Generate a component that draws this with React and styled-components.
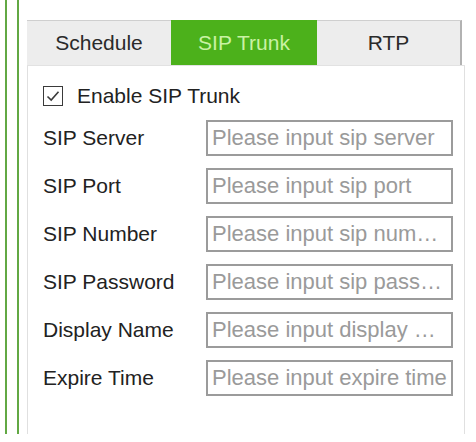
import React from 'react';
import styled, { createGlobalStyle } from 'styled-components';

const GlobalStyle = createGlobalStyle`
  html, body {
    margin: 0;
    padding: 0;
    background: #ffffff;
    font-family: "Liberation Sans", Arial, sans-serif;
  }
`;

const fields = [
  { label: 'SIP Server', placeholder: 'Please input sip server' },
  { label: 'SIP Port', placeholder: 'Please input sip port' },
  { label: 'SIP Number', placeholder: 'Please input sip number' },
  { label: 'SIP Password', placeholder: 'Please input sip password' },
  { label: 'Display Name', placeholder: 'Please input display name' },
  { label: 'Expire Time', placeholder: 'Please input expire time' },
];

const tabs = ['Schedule', 'SIP Trunk', 'RTP'];

const App = () => {
  return (
    <>
      <GlobalStyle />
      <Page>
        <Rail>
          <Rail inner>
            <Wrap>
              <TabBar>
                {tabs.map((t) => (
                  <Tab key={t} active={t === 'SIP Trunk'} last={t === 'RTP'}>
                    {t}
                  </Tab>
                ))}
              </TabBar>
              <Panel>
                <CheckRow>
                  <Box>
                    <svg width="14" height="12" viewBox="0 0 14 12">
                      <path d="M1.5 6.5 L5.2 10 L12.5 1.8" fill="none" stroke="#3a3a3a" strokeWidth="1.6" />
                    </svg>
                  </Box>
                  <CheckText>Enable SIP Trunk</CheckText>
                </CheckRow>
                {fields.map((f) => (
                  <Row key={f.label}>
                    <Label>{f.label}</Label>
                    <Input placeholder={f.placeholder} />
                  </Row>
                ))}
              </Panel>
            </Wrap>
          </Rail>
        </Rail>
      </Page>
    </>
  );
};

export default App;

const Page = styled.div`
  padding-left: 5px;
  height: 442px;
  box-sizing: border-box;
`;

const Rail = styled.div`
  border-left: 2px solid #62a844;
  padding-left: ${(p) => (p.inner ? '8px' : '10px')};
  height: 434px;
  box-sizing: border-box;
`;

const Wrap = styled.div`
  display: flex;
  flex-direction: column;
  padding-top: 20px;
  height: 434px;
  box-sizing: border-box;
  width: 438px;
`;

const TabBar = styled.div`
  display: grid;
  grid-template-columns: 144px 146px 145px;
  height: 46px;
  box-sizing: border-box;
  border-bottom: 1px solid #e2e2e2;
`;

const Tab = styled.div`
  display: flex;
  align-items: center;
  justify-content: center;
  font-size: 21px;
  box-sizing: border-box;
  color: ${(p) => (p.active ? '#c9f2a4' : '#2a2a2a')};
  background: ${(p) => (p.active ? '#4cb11b' : '#ededed')};
  border-top: 1px solid ${(p) => (p.active ? '#4cb11b' : '#cfcfcf')};
  border-right: ${(p) => (p.last ? '2px solid #b2b2b2' : 'none')};
`;

const Panel = styled.div`
  flex: 1;
  display: flex;
  flex-direction: column;
  gap: 12px;
  padding: 18px 0 0 15px;
  border-left: 1px solid #e0e0e0;
  border-right: 1px solid #e0e0e0;
  box-sizing: border-box;
`;

const CheckRow = styled.div`
  display: flex;
  align-items: center;
  height: 24px;
  gap: 14px;
`;

const Box = styled.div`
  width: 18px;
  height: 18px;
  border: 1px solid #3a3a3a;
  background: #fff;
  display: flex;
  align-items: center;
  justify-content: center;
`;

const CheckText = styled.span`
  font-size: 21px;
  color: #222;
`;

const Row = styled.div`
  display: flex;
  align-items: center;
  height: 36px;
`;

const Label = styled.span`
  width: 163px;
  font-size: 21px;
  color: #222;
`;

const Input = styled.input`
  width: 247px;
  height: 36px;
  box-sizing: border-box;
  border: 2px solid #9b9b9b;
  padding: 0 4px;
  font-family: "Liberation Sans", Arial, sans-serif;
  font-size: 22px;
  color: #333;
  background: #fff;
  outline: none;
  text-overflow: ellipsis;

  &::placeholder {
    color: #9a9a9a;
  }
`;
